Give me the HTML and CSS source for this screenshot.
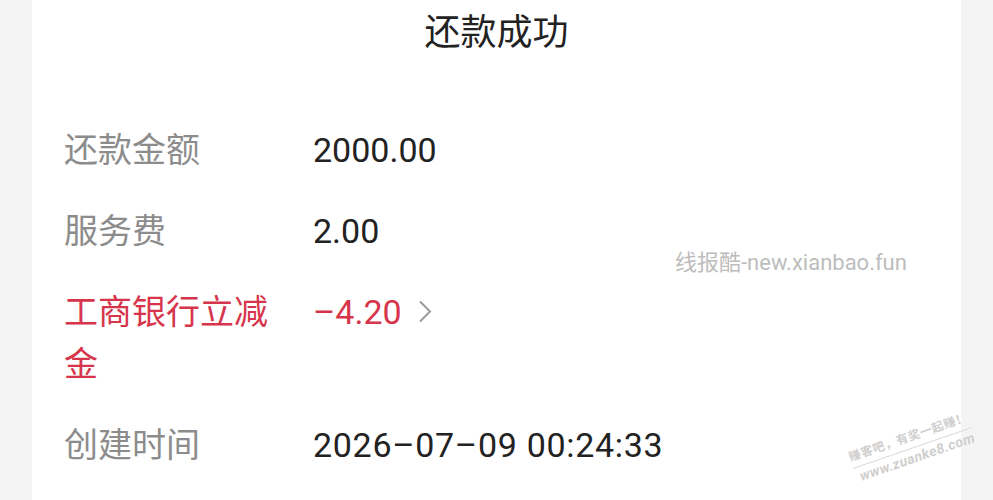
FILE: index.html
```html
<!DOCTYPE html>
<html>
<head>
    <meta charset="utf-8">
    <title>还款成功</title>
    <link rel="stylesheet" href="styles.css">
</head>
<body>
    <div class="card">
        <h1 class="title">还款成功</h1>

        <div class="rows">
            <div class="row">
                <div class="label">还款金额</div>
                <div class="value">2000.00</div>
            </div>
            <div class="row">
                <div class="label">服务费</div>
                <div class="value">2.00</div>
            </div>
            <div class="row red">
                <div class="label">工商银行立减金</div>
                <div class="value">
                    –4.20
                    <svg class="chevron" width="16" height="26" viewBox="0 0 16 26">
                        <path d="M3 2.5 L13 12.5 L3 22.5" fill="none" stroke="#9a9a9a" stroke-width="2"/>
                    </svg>
                </div>
            </div>
            <div class="row">
                <div class="label">创建时间</div>
                <div class="value date">2026–07–09 00:24:33</div>
            </div>
        </div>
    </div>

    <div class="mark">线报酷-new.xianbao.fun</div>
    <div class="stamp">
        <div class="stamp-name">赚客吧，有奖一起赚！</div>
        <div class="stamp-url">www.zuanke8.com</div>
    </div>
</body>
</html>
```

FILE: styles.css
```css
body {
    margin: 0;
    background-color: #f4f4f4;
    font-family: Roboto, "Noto Sans CJK SC", sans-serif;
    height: 500px;
    overflow: hidden;
}
.card {
    background-color: #fff;
    margin: 0 32px;
    padding: 7px 32px 40px;
    height: 460px;
}
.title {
    margin: 0 0 65px;
    text-align: center;
    font-size: 36px;
    font-weight: normal;
    line-height: 52px;
    color: #222;
}
.rows {
    display: flex;
    flex-direction: column;
    gap: 29px;
}
.row {
    display: flex;
    font-size: 34px;
    line-height: 52px;
}
.label {
    width: 222px;
    margin-right: 27px;
    color: #8c8c8c;
}
.value {
    color: #222;
    display: flex;
    align-items: center;
    height: 52px;
}
.date {
    letter-spacing: 0.7px;
}
.red .label,
.red .value {
    color: #d6354c;
}
.chevron {
    margin-left: 15px;
}
.mark {
    position: absolute;
    left: 675px;
    top: 244px;
    font-size: 22px;
    color: #bdbdbd;
}
.stamp {
    position: absolute;
    left: 847px;
    top: 451px;
    transform: rotate(-19deg);
    transform-origin: left top;
    font-weight: bold;
    color: #cfcfcf;
}
.stamp-name {
    font-size: 12px;
    line-height: 15px;
    letter-spacing: 0.5px;
    border-bottom: 1px solid #dcdcdc;
    padding-bottom: 3px;
}
.stamp-url {
    font-size: 14px;
    line-height: 18px;
    font-style: italic;
    letter-spacing: 0.4px;
    padding-left: 4px;
}
```
